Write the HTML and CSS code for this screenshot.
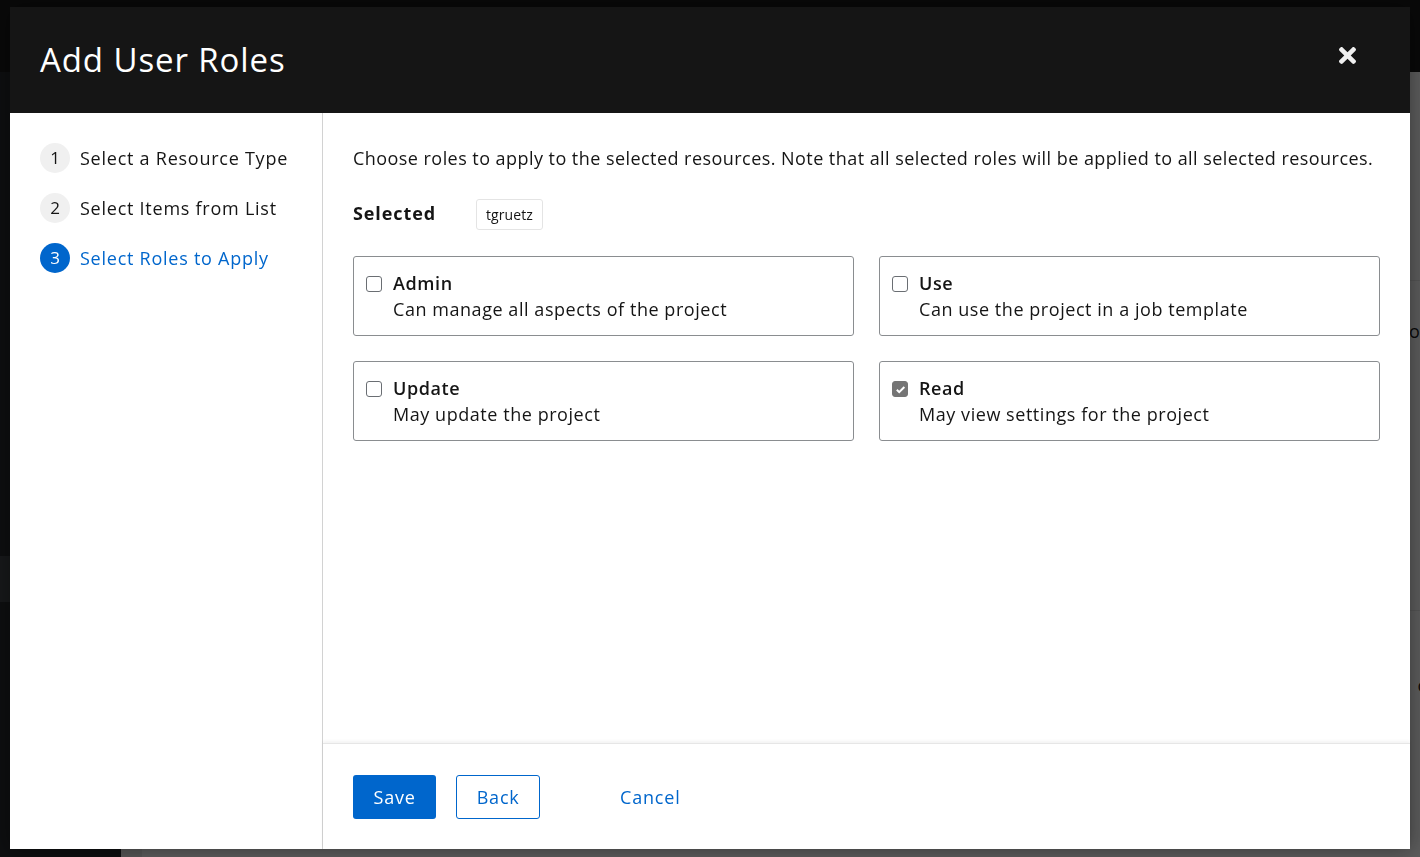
FILE: index.html
```html
<!DOCTYPE html>
<html lang="en">
<head>
<meta charset="utf-8">
<title>Add User Roles</title>
<link rel="stylesheet" href="styles.css">
</head>
<body>
<div class="app">
  <header class="masthead"></header>
  <div class="app-body">
    <aside class="sidebar">
      <div class="sidebar-item active"></div>
    </aside>
    <main class="app-content">
      <div class="card-bg">
        <div class="bg-row"><span class="bg-text">of</span></div>
        <div class="bg-row tall"><span class="bg-text">c</span></div>
      </div>
    </main>
  </div>
</div>

<div class="backdrop">
  <div class="modal" role="dialog">
    <header class="modal-header">
      <h1 class="modal-title">Add User Roles</h1>
      <button class="close-btn" aria-label="Close">
        <svg width="17" height="17" viewBox="0 80 352 352" fill="currentColor"><path d="M242.72 256l100.07-100.07c12.28-12.28 12.28-32.19 0-44.48l-22.24-22.24c-12.28-12.28-32.19-12.28-44.48 0L176 189.28 75.93 89.21c-12.28-12.28-32.190-12.28-44.48 0L9.21 111.450c-12.28 12.28-12.28 32.19 0 44.48L109.28 256 9.21 356.07c-12.28 12.28-12.28 32.19 0 44.48l22.24 22.24c12.28 12.28 32.2 12.28 44.48 0L176 322.72l100.07 100.07c12.28 12.28 32.2 12.28 44.48 0l22.24-22.24c12.28-12.280 12.28-32.19 0-44.48L242.72 256z"/></svg>
      </button>
    </header>
    <div class="wizard">
      <nav class="wizard-nav">
        <ol class="steps">
          <li class="step"><span class="step-num">1</span><span class="step-label">Select a Resource Type</span></li>
          <li class="step"><span class="step-num">2</span><span class="step-label">Select Items from List</span></li>
          <li class="step current"><span class="step-num">3</span><span class="step-label">Select Roles to Apply</span></li>
        </ol>
      </nav>
      <div class="wizard-main">
        <div class="wizard-body">
          <p class="intro">Choose roles to apply to the selected resources. Note that all selected roles will be applied to all selected resources.</p>
          <div class="selected-row">
            <span class="selected-label">Selected</span>
            <span class="chip">tgruetz</span>
          </div>
          <div class="roles">
            <label class="role">
              <span class="box"></span>
              <span class="role-text"><span class="role-name">Admin</span><span class="role-desc">Can manage all aspects of the project</span></span>
            </label>
            <label class="role">
              <span class="box"></span>
              <span class="role-text"><span class="role-name">Use</span><span class="role-desc">Can use the project in a job template</span></span>
            </label>
            <label class="role">
              <span class="box"></span>
              <span class="role-text"><span class="role-name">Update</span><span class="role-desc">May update the project</span></span>
            </label>
            <label class="role">
              <span class="box checked"><svg width="11" height="11" viewBox="0 0 12 12"><path d="M2 6.3l2.6 2.6L10.2 3.3" fill="none" stroke="#fff" stroke-width="2.2"/></svg></span>
              <span class="role-text"><span class="role-name">Read</span><span class="role-desc">May view settings for the project</span></span>
            </label>
          </div>
        </div>
        <footer class="wizard-footer">
          <button class="btn primary">Save</button>
          <button class="btn secondary">Back</button>
          <button class="btn link">Cancel</button>
        </footer>
      </div>
    </div>
  </div>
</div>
</body>
</html>
```

FILE: styles.css
```css
* { box-sizing: border-box; }
html, body { margin: 0; height: 100%; }
body {
  font-family: "Open Sans", "Liberation Sans", sans-serif;
  color: #151515;
  overflow: hidden;
}

/* underlying page */
.app { height: 857px; display: flex; flex-direction: column; overflow: hidden; }
.masthead { height: 72px; background: #151515; flex: none; }
.app-body { flex: 1; display: flex; min-height: 0; }
.sidebar { width: 121px; background: #212427; padding-top: 484px; }
.sidebar-item { height: 46px; }
.sidebar-item.active { background: #393d42; }
.app-content { flex: 1; background: #dbdbdb; padding-left: 21px; }
.card-bg { background: #ececec; height: 100%; padding-top: 208px; }
.bg-row { height: 330px; border-top: 1px solid #d8d8d8; display: flex; align-items: flex-start; justify-content: flex-end; padding-top: 38px; font-size: 18px; }
.bg-row.tall { height: 400px; padding-top: 62px; }
.bg-text { margin-right: -6px; }

/* backdrop + modal */
.backdrop {
  position: fixed; inset: 0;
  background: rgba(3, 3, 3, 0.62);
  padding: 7px 10px 8px 10px;
  display: flex;
}
.modal {
  flex: 1;
  display: flex; flex-direction: column;
  background: #fff;
  box-shadow: 0 0 20px rgba(0,0,0,0.4);
}
.modal-header {
  height: 106px; flex: none;
  background: #151515;
  display: flex; align-items: center; justify-content: space-between;
  padding: 0 54px 2px 30px;
}
.modal-title {
  margin: 0;
  color: #fff;
  font-size: 33px; font-weight: 500;
  letter-spacing: 0.9px;
}
.close-btn {
  border: 0; background: none; padding: 0; color: #f0f0f0;
  display: flex; margin-top: -8px;
}

.wizard { flex: 1; display: flex; min-height: 0; }
.wizard-nav {
  width: 313px; flex: none;
  border-right: 1px solid #d2d2d2;
  padding: 30px 0 0 30px;
}
.steps { list-style: none; margin: 0; padding: 0; display: flex; flex-direction: column; gap: 20px; }
.step { display: flex; align-items: center; gap: 10px; font-size: 18px; line-height: 30px; }
.step-label { letter-spacing: 0.75px; }
.step-num {
  width: 30px; height: 30px; border-radius: 50%;
  background: #f0f0f0; color: #151515;
  display: flex; align-items: center; justify-content: center;
  font-size: 17px;
}
.step.current .step-num { background: #06c; color: #fff; }
.step.current .step-label { color: #06c; }

.wizard-main { flex: 1; display: flex; flex-direction: column; min-width: 0; }
.wizard-body { flex: 1; padding: 32px 30px 0 30px; }
.intro { margin: 0; font-size: 18px; line-height: 26px; letter-spacing: 0.45px; white-space: nowrap; }
.selected-row { display: flex; align-items: center; margin-top: 28px; height: 31px; }
.selected-label { font-weight: 700; font-size: 18px; width: 123px; letter-spacing: 0.9px; margin-top: -3px; }
.chip {
  border: 1px solid #e4e4e4; border-radius: 3px;
  height: 31px; padding: 0 9px;
  display: flex; align-items: center;
  font-size: 14px; letter-spacing: 0.1px;
}
.roles {
  margin-top: 26px;
  display: grid; grid-template-columns: 1fr 1fr; column-gap: 25px; row-gap: 25px;
}
.role {
  border: 1px solid #8a8d90; border-radius: 3px;
  padding: 13px 12px 12px 12px;
  display: flex; align-items: flex-start; gap: 11px;
  height: 80px;
}
.box {
  width: 16px; height: 16px; flex: none; margin-top: 6px;
  border: 1px solid #6a6e73; border-radius: 3px; background: #fff;
  display: flex; align-items: center; justify-content: center;
}
.box.checked { background: #757575; border-color: #757575; }
.role-text { display: flex; flex-direction: column; font-size: 18px; line-height: 26px; }
.role-name { font-weight: 600; letter-spacing: 0.6px; }
.role-desc { letter-spacing: 0.55px; }

.wizard-footer {
  height: 106px; flex: none;
  border-top: 1px solid #e6e6e6;
  box-shadow: 0 -2px 3px rgba(0,0,0,0.05);
  display: flex; align-items: center; gap: 20px;
  padding: 0 30px;
}
.btn {
  font-family: inherit; font-size: 18px; letter-spacing: 0.8px;
  height: 44px; padding: 0 20px; border-radius: 3px;
  cursor: pointer;
}
.btn.primary { background: #06c; color: #fff; border: 0; padding: 0 20.5px; }
.btn.secondary { background: #fff; color: #06c; border: 1px solid #06c; padding: 0 19.5px; }
.btn.link { background: none; border: 0; color: #06c; margin-left: 40px; padding: 0 20px; }
```
